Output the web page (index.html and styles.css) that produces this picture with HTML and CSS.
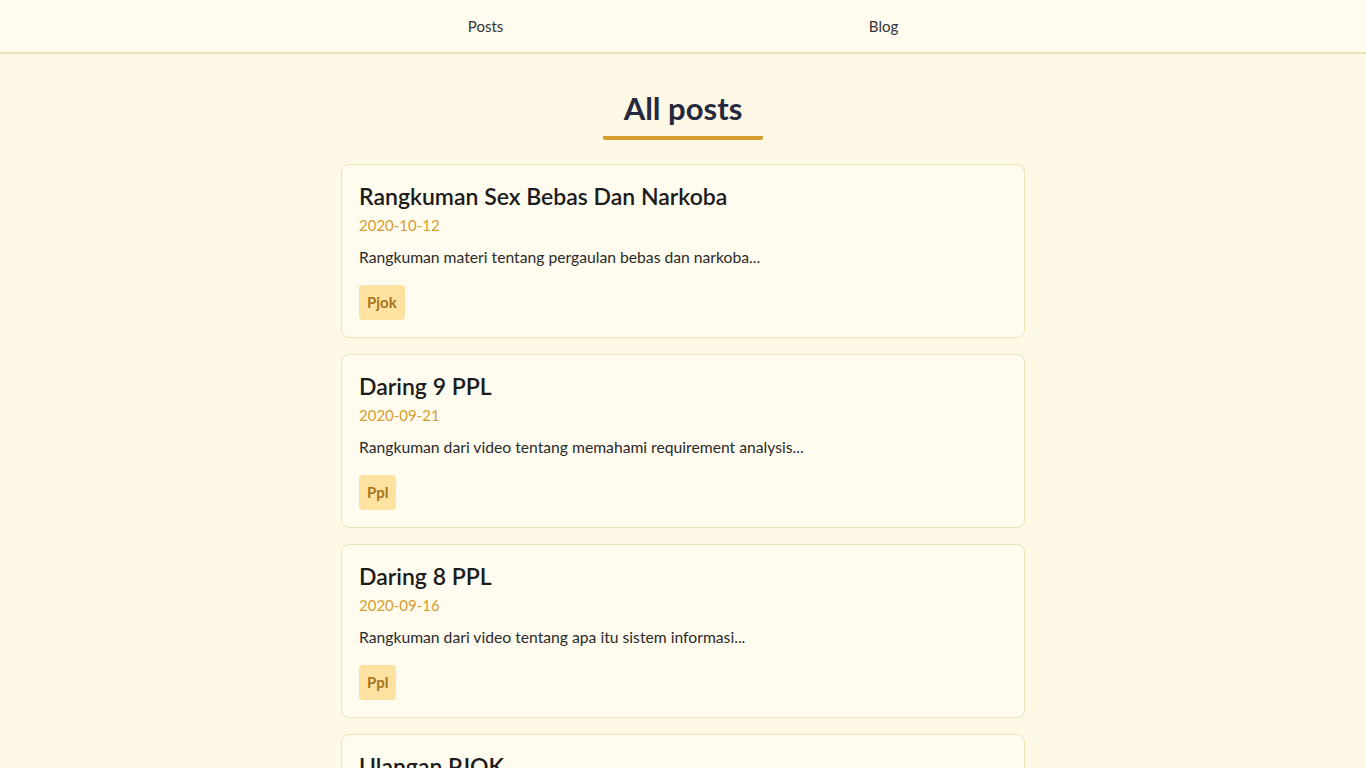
FILE: index.html
```html
<!DOCTYPE html>
<html lang="id">
<head>
<meta charset="utf-8">
<title>All posts</title>
<link rel="stylesheet" href="styles.css">
</head>
<body>
<header class="site-header">
  <nav class="nav">
    <a class="nav-link" href="#">Posts</a>
    <a class="nav-link" href="#">Blog</a>
  </nav>
</header>
<main class="main">
  <h1 class="page-title">All posts</h1>
  <div class="posts">
    <article class="card">
      <h2 class="card-title">Rangkuman Sex Bebas Dan Narkoba</h2>
      <div class="card-date">2020-10-12</div>
      <p class="card-excerpt">Rangkuman materi tentang pergaulan bebas dan narkoba...</p>
      <div class="tags"><span class="tag">Pjok</span></div>
    </article>
    <article class="card">
      <h2 class="card-title">Daring 9 PPL</h2>
      <div class="card-date">2020-09-21</div>
      <p class="card-excerpt">Rangkuman dari video tentang memahami requirement analysis...</p>
      <div class="tags"><span class="tag">Ppl</span></div>
    </article>
    <article class="card">
      <h2 class="card-title">Daring 8 PPL</h2>
      <div class="card-date">2020-09-16</div>
      <p class="card-excerpt">Rangkuman dari video tentang apa itu sistem informasi...</p>
      <div class="tags"><span class="tag">Ppl</span></div>
    </article>
    <article class="card">
      <h2 class="card-title">Ulangan PJOK</h2>
      <div class="card-date">2020-09-10</div>
      <p class="card-excerpt">Rangkuman ulangan PJOK...</p>
      <div class="tags"><span class="tag">Pjok</span></div>
    </article>
  </div>
</main>
</body>
</html>
```
FILE: styles.css
```css
* { box-sizing: border-box; }
html, body { margin: 0; padding: 0; }
body {
  background: #fef8e7;
  font-family: Lato, "Open Sans", sans-serif;
  color: #222;
}
.site-header {
  background: #fffbee;
  border-bottom: 2px solid #efe2b9;
  height: 54px;
}
.nav {
  width: 796px;
  margin: 0 auto;
  height: 52px;
  display: flex;
  justify-content: space-around;
  align-items: center;
}
.nav-link {
  color: #333;
  text-decoration: none;
  font-size: 15px;
}
.main {
  width: 684px;
  margin: 0 auto;
  padding-top: 34px;
}
.page-title {
  margin: 0 auto 24px;
  width: 160px;
  text-align: center;
  font-size: 31px;
  line-height: 40px;
  font-weight: 700;
  color: #262a3e;
  padding-bottom: 8px;
  border-bottom: 4px solid #d69e2e;
  border-radius: 0 0 2px 2px;
}
.posts {
  display: flex;
  flex-direction: column;
  gap: 16px;
}
.card {
  background: #fffbee;
  border: 1px solid #efe2b9;
  border-radius: 8px;
  padding: 16px 17px 17px;
}
.card-title {
  margin: 0 0 3px;
  font-size: 23px;
  line-height: 30px;
  font-weight: 600;
  color: #1c1c1c;
}
.card-date {
  color: #d69e2e;
  font-size: 15px;
  line-height: 22px;
}
.card-excerpt {
  margin: 10px 0 0;
  font-size: 15.7px;
  line-height: 22px;
  color: #2a2a2a;
}
.tags {
  margin-top: 17px;
  display: flex;
  gap: 8px;
}
.tag {
  background: #fde2a1;
  color: #a7741d;
  font-weight: 700;
  font-size: 15px;
  line-height: 23px;
  padding: 6px 8px;
  border-radius: 4px;
}
```
